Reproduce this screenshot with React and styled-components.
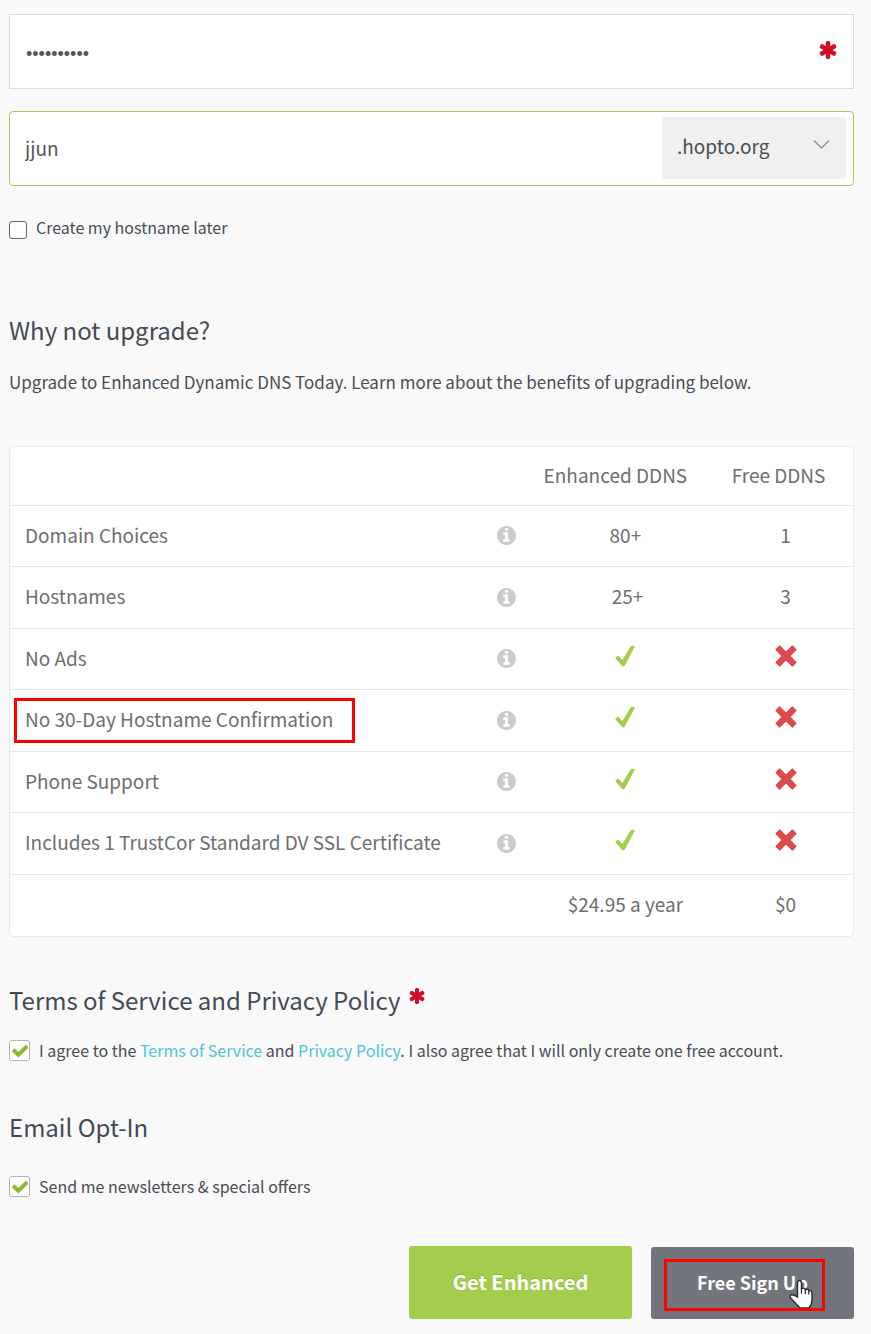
import React from "react";
import styled, { createGlobalStyle, css } from "styled-components";

const Global = createGlobalStyle`
  *, *::before, *::after { box-sizing: border-box; }
  body {
    margin: 0;
    background: #f9f9f9;
    color: #484d54;
    font-family: "Noto Sans CJK SC", "Open Sans", sans-serif;
    font-size: 18px;
    line-height: 26px;
  }
`;

const Form = styled.form`
  padding: 14px 17px 15px 9px;
`;

const Field = styled.div`
  display: flex;
  align-items: center;
  height: 75px;
  margin-bottom: 22px;
  padding: 0 7px 2px 0;
  background: #fff;
  border: 1px solid ${(p) => (p.$active ? "#a4cd4b" : "#dcdcdc")};
  border-radius: ${(p) => (p.$active ? "4px" : "0")};
`;

const TextInput = styled.input`
  flex: 1;
  min-width: 0;
  height: 100%;
  padding: 0 15px;
  border: 0;
  outline: 0;
  background: transparent;
  color: #555;
  font: inherit;
  font-size: 19px;
  &[type="password"] {
    padding: 7px 16px 0;
    font-family: "Liberation Sans", sans-serif;
    font-size: 18px;
  }
`;

const FieldMark = styled.span`
  display: flex;
  padding: 0 9px 2px 0;
`;

const SelectWrap = styled.div`
  position: relative;
  width: 184px;
  height: 62px;
`;

const Select = styled.select`
  appearance: none;
  width: 100%;
  height: 100%;
  padding: 0 40px 3px 15px;
  border: 0;
  border-radius: 4px;
  background: #f0f0f0;
  color: #484d54;
  font: inherit;
  font-size: 19px;
`;

const SelectArrow = styled.svg`
  position: absolute;
  top: 22px;
  right: 16px;
  pointer-events: none;
`;

const CheckLabel = styled.label`
  display: flex;
  align-items: center;
  gap: 9px;
  font-size: 16px;
`;

const nativeBox = css`
  width: 18px;
  height: 18px;
  margin-top: 6px;
  border: 1px solid #666;
  border-radius: 3px;
`;

const greenBox = css`
  width: 21px;
  height: 21px;
  border: 1px solid #b4b4b4;
  border-radius: 3px;
`;

const Box = styled.span`
  position: relative;
  display: flex;
  flex: none;
  svg { position: absolute; top: 5px; left: 3px; pointer-events: none; }
`;

const Checkbox = styled.input`
  appearance: none;
  margin: 0;
  background: #fff;
  ${(p) => (p.$green ? greenBox : nativeBox)}
`;

const Heading = styled.h2`
  display: flex;
  gap: 8px;
  margin: 0;
  font-size: 24px;
  font-weight: 400;
  line-height: 36px;
  color: #434a54;
  svg { margin-top: 6px; }
`;

const Lead = styled.p`
  margin: 0;
  font-size: 17px;
  line-height: 26px;
`;

const Section = styled.section`
  padding-top: ${(p) => p.$top}px;
  display: flex;
  flex-direction: column;
  gap: ${(p) => p.$gap}px;
`;

const TableCard = styled.div`
  margin-top: 51px;
  background: #fff;
  border: 1px solid #e9e9e9;
  border-radius: 5px;
`;

const Table = styled.table`
  width: 100%;
  table-layout: fixed;
  border-collapse: collapse;
  font-size: 19px;
  color: #6e6e6e;
  tbody tr { height: 61px; border-top: 1px solid #e8e8e8; }
  tbody tr:nth-child(even) { height: 62px; }
  tfoot tr { height: 62px; border-top: 1px solid #e8e8e8; }
`;

const Cell = styled.td`
  height: ${(p) => (p.$head ? "58px" : "auto")};
  padding: 0 ${(p) => p.$end || 0}px 2px ${(p) => (p.$name ? 15 : 0)}px;
  text-align: ${(p) => (p.$name ? "left" : "center")};
  font-weight: 400;
  svg { display: block; margin: 0 auto; }
`;

const InfoMark = styled.span`
  display: block;
  padding: 2px 1px 0 0;
`;

const Mark = styled.span`
  display: block;
  padding-bottom: 4px;
`;

const Name = styled.span`
  position: relative;
`;

const Highlight = styled.span`
  position: absolute;
  inset: ${(p) => p.$inset};
  border: 3px solid #ff0000;
  pointer-events: none;
`;

const Link = styled.a`
  color: #4ec5d8;
  text-decoration: none;
`;

const Actions = styled.div`
  display: flex;
  justify-content: flex-end;
  align-items: flex-end;
  gap: 19px;
  margin-top: 47px;
`;

const Button = styled.button`
  position: relative;
  width: ${(p) => (p.$primary ? 223 : 203)}px;
  height: ${(p) => (p.$primary ? 73 : 72)}px;
  padding: 0 0 2px;
  border: 0;
  border-radius: 3px;
  background: ${(p) => (p.$primary ? "#a4cd4b" : "#72757c")};
  color: #fff;
  font: inherit;
  font-weight: 700;
  font-size: ${(p) => (p.$primary ? 20 : 18)}px;
  text-shadow: ${(p) => (p.$primary ? "0 -1px 0 rgba(0, 0, 0, 0.15)" : "none")};
`;

const Pointer = styled.svg`
  position: absolute;
  top: 32px;
  left: 137px;
`;

const Asterisk = ({ size }) => (
  <svg width={size} height={size} viewBox="128 128 1536 1536" fill="#d20f2a" aria-hidden="true">
    <path d="M1546 1050q46 26 59.5 77.5t-12.5 97.5l-64 110q-26 46-77.5 59.5t-97.5-12.5l-266-153v307q0 52-38 90t-90 38h-128q-52 0-90-38t-38-90v-307l-266 153q-46 26-97.5 12.5t-77.5-59.5l-64-110q-26-46-12.5-97.5t59.5-77.5l266-154-266-154q-46-26-59.5-77.5t12.5-97.5l64-110q26-46 77.5-59.5t97.5 12.5l266 153v-307q0-52 38-90t90-38h128q52 0 90 38t38 90v307l266-153q46-26 97.5-12.5t77.5 59.5l64 110q26 46 12.5 97.5t-59.5 77.5l-266 154z" />
  </svg>
);

const Info = () => (
  <svg width="19" height="19" viewBox="128 128 1536 1536" fill="#cbcbcb" aria-hidden="true">
    <path d="M1152 1376v-160q0-14-9-23t-23-9h-96v-512q0-14-9-23t-23-9h-320q-14 0-23 9t-9 23v160q0 14 9 23t23 9h96v320h-96q-14 0-23 9t-9 23v160q0 14 9 23t23 9h448q14 0 23-9t9-23zm-128-896v-160q0-14-9-23t-23-9h-192q-14 0-23 9t-9 23v160q0 14 9 23t23 9h192q14 0 23-9t9-23zm640 416q0 209-103 385.5t-279.5 279.5-385.5 103-385.5-103-279.5-279.5-103-385.5 103-385.5 279.5-279.5 385.5-103 385.5 103 279.5 279.5 103 385.5z" />
  </svg>
);

const Tick = () => (
  <svg width="20" height="22" viewBox="0 0 20 22" fill="none" role="img" aria-label="Yes">
    <path d="M0.6 13.4 Q0.2 12.6 1 11.9 L2.4 10.9 Q3.2 10.5 3.9 11.2 L7.4 14.9 L15.6 1.4 Q16 0.7 16.9 0.8 L19.2 1 Q20 1.2 19.7 2.1 L9.7 20.4 Q8.5 22 6.9 20.7 Z" fill="#a4cd4b" />
  </svg>
);

const Cross = () => (
  <svg width="22" height="22" viewBox="0 0 22 22" fill="none" role="img" aria-label="No">
    <path d="M4.6 1 L11 7.2 L17.4 1 L21 4.6 L14.8 11 L21 17.4 L17.4 21 L11 14.8 L4.6 21 L1 17.4 L7.2 11 L1 4.6 Z" fill="#dc4b4b" stroke="#dc4b4b" strokeWidth="1.2" strokeLinejoin="round" />
  </svg>
);

const SmallTick = () => (
  <svg width="16" height="13" viewBox="0 0 16 13" fill="none" aria-hidden="true">
    <path d="M2.5 6 L6.4 9.7 L13.8 2.5" stroke="#8bbb2c" strokeWidth="4" strokeLinecap="square" />
  </svg>
);

const rows = [
  { name: "Domain Choices", enhanced: "80+", free: "1" },
  { name: "Hostnames", enhanced: "\u00a025+", free: "3" },
  { name: "No Ads" },
  { name: "No 30-Day Hostname Confirmation", boxed: true },
  { name: "Phone Support" },
  { name: "Includes 1 TrustCor Standard DV SSL Certificate" },
];

export default function App() {
  return (
    <>
      <Global />
      <Form onSubmit={(e) => e.preventDefault()}>
        <Field>
          <TextInput type="password" aria-label="Password" defaultValue="abcdefghij" />
          <FieldMark><Asterisk size={18} /></FieldMark>
        </Field>
        <Field $active>
          <TextInput type="text" aria-label="Hostname" defaultValue="jjun" />
          <SelectWrap>
            <Select aria-label="Domain" defaultValue=".hopto.org">
              <option>.hopto.org</option>
            </Select>
            <SelectArrow width="17" height="11" viewBox="0 0 17 11" fill="none" aria-hidden="true">
              <path d="M1 1.5 L8.5 9 L16 1.5" stroke="#8b8b8b" strokeWidth="1.3" />
            </SelectArrow>
          </SelectWrap>
        </Field>
        <Section $top={6} $gap={0}>
          <CheckLabel>
            <Box><Checkbox type="checkbox" /></Box>
            Create my hostname later
          </CheckLabel>
        </Section>

        <Section $top={72} $gap={21}>
          <Heading>Why not upgrade?</Heading>
          <Lead>Upgrade to Enhanced Dynamic DNS Today. Learn more about the benefits of upgrading below.</Lead>
        </Section>

        <TableCard>
          <Table>
            <colgroup>
              <col />
              <col style={{ width: "6%" }} />
              <col style={{ width: "22%" }} />
              <col style={{ width: "16%" }} />
            </colgroup>
            <thead>
              <tr>
                <Cell $head />
                <Cell $head />
                <Cell as="th" scope="col" $head $end={20}>Enhanced DDNS</Cell>
                <Cell as="th" scope="col" $head $end={14}>Free DDNS</Cell>
              </tr>
            </thead>
            <tbody>
              {rows.map((row) => (
                <tr key={row.name}>
                  <Cell as="th" scope="row" $name>
                    <Name>
                      {row.name}
                      {row.boxed && <Highlight $inset="-7px -22px -11px -11px" />}
                    </Name>
                  </Cell>
                  <Cell><InfoMark><Info /></InfoMark></Cell>
                  <Cell>{row.enhanced || <Mark><Tick /></Mark>}</Cell>
                  <Cell>{row.free || <Mark><Cross /></Mark>}</Cell>
                </tr>
              ))}
            </tbody>
            <tfoot>
              <tr>
                <Cell />
                <Cell />
                <Cell>$24.95 a year</Cell>
                <Cell>$0</Cell>
              </tr>
            </tfoot>
          </Table>
        </TableCard>

        <Section $top={45} $gap={19}>
          <Heading>Terms of Service and Privacy Policy <Asterisk size={16} /></Heading>
          <CheckLabel>
            <Box><Checkbox $green type="checkbox" defaultChecked /><SmallTick /></Box>
            <span>
              I agree to the <Link href="#terms">Terms of Service</Link> and <Link href="#privacy">Privacy Policy</Link>. I also agree that I will only create one free account.
            </span>
          </CheckLabel>
        </Section>

        <Section $top={46} $gap={28}>
          <Heading>Email Opt-In</Heading>
          <CheckLabel>
            <Box><Checkbox $green type="checkbox" defaultChecked /><SmallTick /></Box>
            Send me newsletters &amp; special offers
          </CheckLabel>
        </Section>

        <Actions>
          <Button type="button" $primary>Get Enhanced</Button>
          <Button type="submit">
            Free Sign Up
            <Pointer width="26" height="30" viewBox="0 0 26 30" aria-hidden="true">
              <path d="M9.5 18 V4 Q9.5 1.5 11.5 1.5 Q13.5 1.5 13.5 4 V9.5 Q17 8.5 17.3 10.5 Q20.5 9.5 20.8 11.7 Q24 11 24 14.5 V21 Q24 25 21 29 H12 L3 19.5 Q0.8 16.5 3.5 15.8 Q5 15.3 9.5 18 Z" fill="#fff" stroke="#222633" strokeWidth="1.4" />
              <path d="M13.5 9 V14.5 M17.3 10.5 V15 M20.8 11.7 V15.5" stroke="#222633" strokeWidth="1.2" />
            </Pointer>
            <Highlight $inset="12px 29px 8px 13px" />
          </Button>
        </Actions>
      </Form>
    </>
  );
}
